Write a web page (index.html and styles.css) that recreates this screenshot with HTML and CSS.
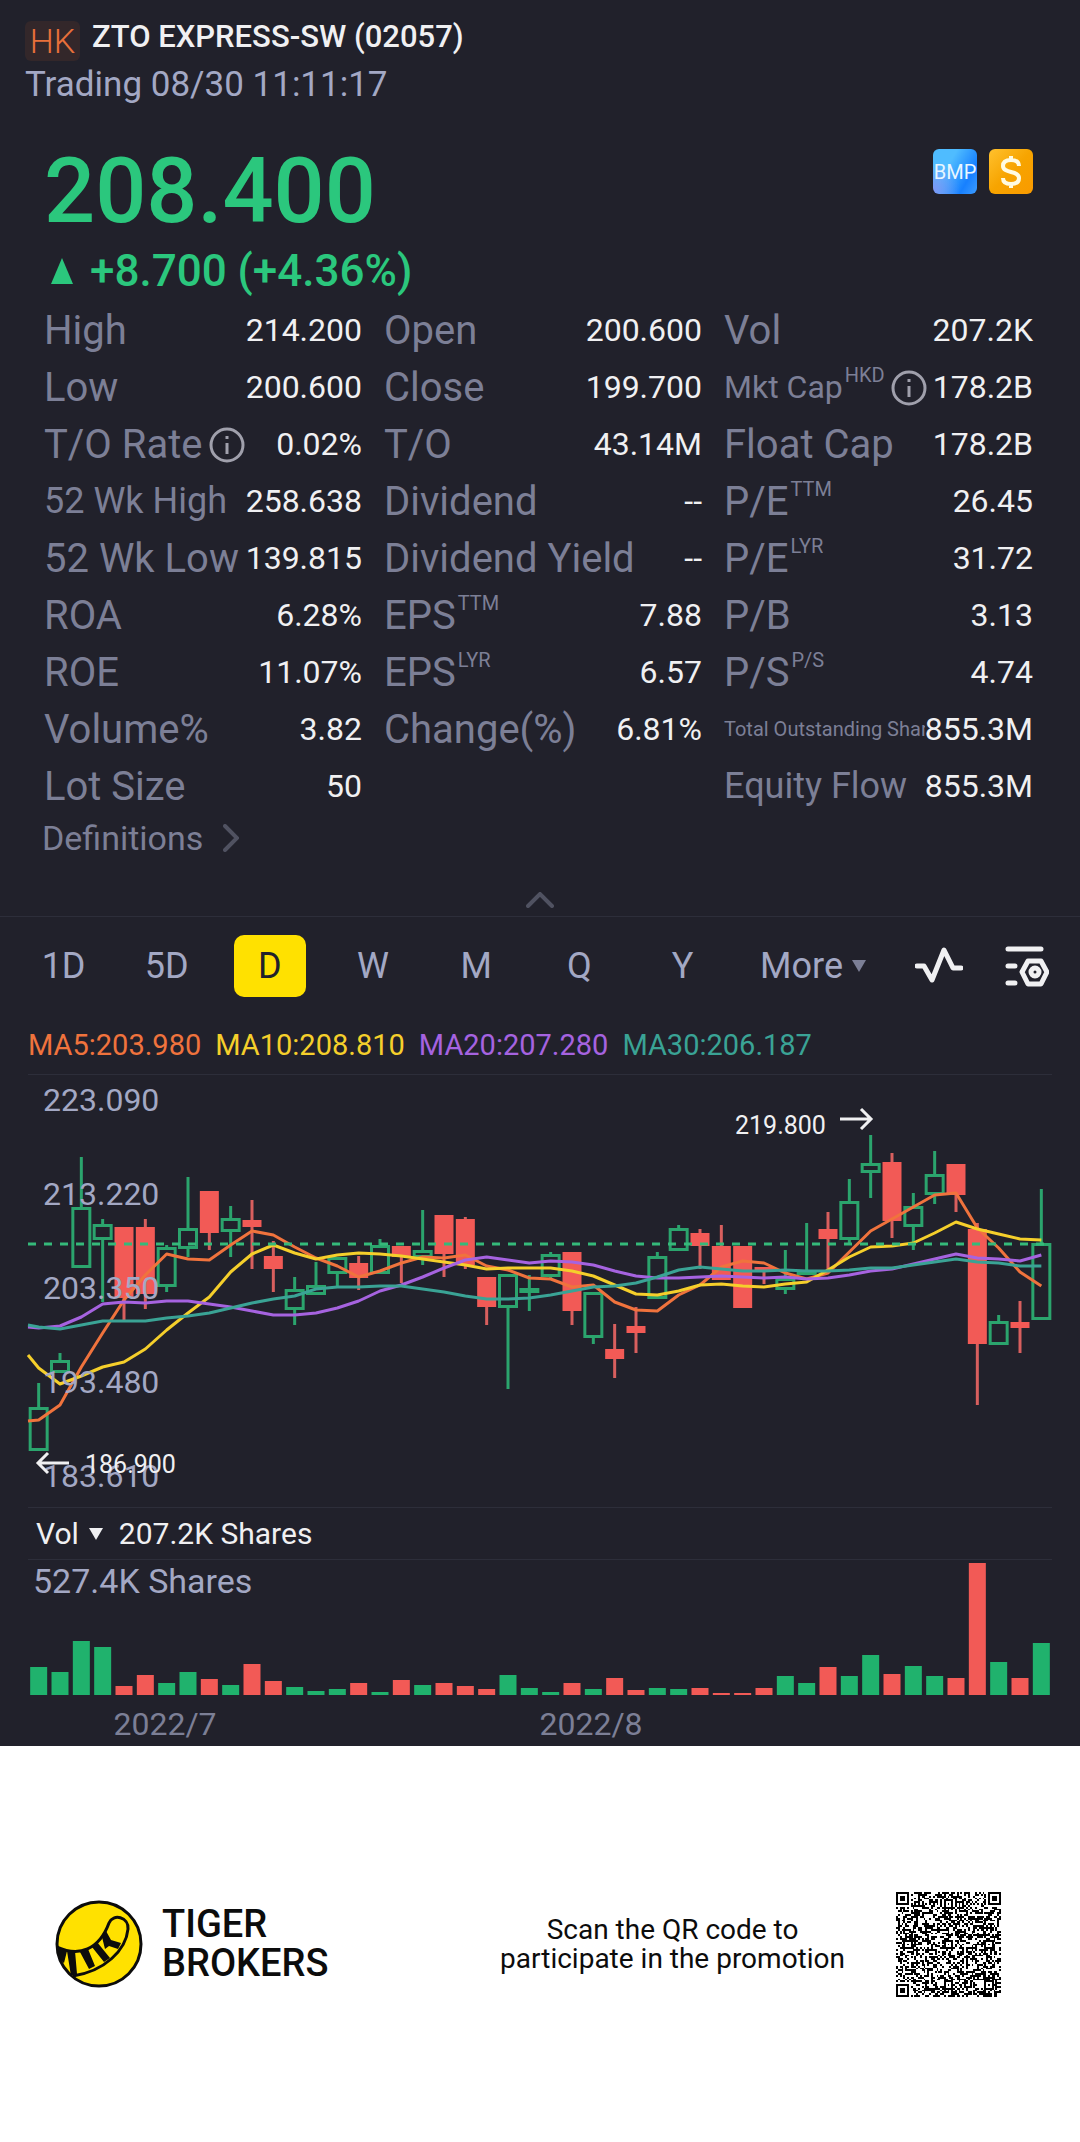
FILE: index.html
```html
<!DOCTYPE html>
<html lang="en">
<head>
<meta charset="utf-8">
<meta name="viewport" content="width=device-width, initial-scale=1">
<title>ZTO EXPRESS-SW (02057)</title>
<link rel="stylesheet" href="styles.css">
</head>
<body>
<main class="quote">
  <header class="head">
    <div class="head-row">
      <span class="market">HK</span>
      <h1 class="name">ZTO EXPRESS-SW (02057)</h1>
    </div>
    <p class="status">Trading 08/30 11:11:17</p>
  </header>

  <section class="price-block">
    <div>
      <p class="price">208.400</p>
      <p class="change">
        <svg class="up" viewBox="0 0 24 28" aria-hidden="true"><path d="M12 1 23 27H1z"/></svg>
        <span>+8.700 (+4.36%)</span>
      </p>
    </div>
    <div class="badges">
      <span class="badge badge-bmp">BMP</span>
      <span class="badge badge-cash">
        <svg viewBox="0 0 44 44" aria-label="Dollar"><path d="M30 16c0-4-3-6-8-6s-8 2-8 6c0 8 16 4 16 12 0 4-3 6-8 6s-8-2-8-6M22 6v5M22 33v5" /></svg>
      </span>
    </div>
  </section>

  <section class="stats">
    <dl class="col">
      <div class="row"><dt>High</dt><dd>214.200</dd></div>
      <div class="row"><dt>Low</dt><dd>200.600</dd></div>
      <div class="row"><dt>T/O Rate<svg class="info" viewBox="0 0 36 36" aria-label="Info"><circle cx="18" cy="18" r="16"/><path d="M18 16v11M18 9v3"/></svg></dt><dd>0.02%</dd></div>
      <div class="row"><dt class="mid">52 Wk High</dt><dd>258.638</dd></div>
      <div class="row"><dt>52 Wk Low</dt><dd>139.815</dd></div>
      <div class="row"><dt>ROA</dt><dd>6.28%</dd></div>
      <div class="row"><dt>ROE</dt><dd>11.07%</dd></div>
      <div class="row"><dt>Volume%</dt><dd>3.82</dd></div>
      <div class="row"><dt>Lot Size</dt><dd>50</dd></div>
    </dl>
    <dl class="col">
      <div class="row"><dt>Open</dt><dd>200.600</dd></div>
      <div class="row"><dt>Close</dt><dd>199.700</dd></div>
      <div class="row"><dt>T/O</dt><dd>43.14M</dd></div>
      <div class="row"><dt>Dividend</dt><dd>--</dd></div>
      <div class="row"><dt>Dividend Yield</dt><dd>--</dd></div>
      <div class="row"><dt>EPS<sup>TTM</sup></dt><dd>7.88</dd></div>
      <div class="row"><dt>EPS<sup>LYR</sup></dt><dd>6.57</dd></div>
      <div class="row"><dt>Change(%)</dt><dd>6.81%</dd></div>
    </dl>
    <dl class="col">
      <div class="row"><dt>Vol</dt><dd>207.2K</dd></div>
      <div class="row"><dt class="small">Mkt Cap<sup>HKD</sup><svg class="info" viewBox="0 0 36 36" aria-label="Info"><circle cx="18" cy="18" r="16"/><path d="M18 16v11M18 9v3"/></svg></dt><dd>178.2B</dd></div>
      <div class="row"><dt>Float Cap</dt><dd>178.2B</dd></div>
      <div class="row"><dt>P/E<sup>TTM</sup></dt><dd>26.45</dd></div>
      <div class="row"><dt>P/E<sup>LYR</sup></dt><dd>31.72</dd></div>
      <div class="row"><dt>P/B</dt><dd>3.13</dd></div>
      <div class="row"><dt>P/S<sup>P/S</sup></dt><dd>4.74</dd></div>
      <div class="row"><dt class="tiny">Total Outstanding Shares</dt><dd>855.3M</dd></div>
      <div class="row"><dt class="mid">Equity Flow</dt><dd>855.3M</dd></div>
    </dl>
  </section>

  <a class="definitions" href="#definitions">Definitions
    <svg viewBox="0 0 16 28" aria-hidden="true"><path d="M2 2l12 12L2 26"/></svg>
  </a>
  <button class="collapse" type="button" aria-label="Collapse">
    <svg viewBox="0 0 28 16" aria-hidden="true"><path d="M2 14 14 2l12 12"/></svg>
  </button>

  <nav class="toolbar">
    <div class="tabs">
      <button type="button">1D</button>
      <button type="button">5D</button>
      <button type="button" class="active">D</button>
      <button type="button">W</button>
      <button type="button">M</button>
      <button type="button">Q</button>
      <button type="button">Y</button>
    </div>
    <button type="button" class="more">More<svg viewBox="0 0 14 12" aria-hidden="true"><path d="M0 0h14L7 12z"/></svg></button>
    <button type="button" class="tool" aria-label="Indicators">
      <svg width="48" height="40" viewBox="0 0 48 40"><path d="M2 20h7l8 14L29 4l9 18h8"/></svg>
    </button>
    <button type="button" class="tool" aria-label="Chart settings">
      <svg width="44" height="42" viewBox="0 0 44 42"><path d="M3 4h33M3 21h7M3 38h7M23 16h13l6 11-6 12H23l-6-12z"/><circle cx="30" cy="27" r="4"/></svg>
    </button>
  </nav>

  <section class="charts">
    <ul class="averages">
      <li class="ma5">MA5:203.980</li>
      <li class="ma10">MA10:208.810</li>
      <li class="ma20">MA20:207.280</li>
      <li class="ma30">MA30:206.187</li>
    </ul>
    <svg class="candles" id="candles" viewBox="0 0 1024 432" role="img" aria-label="Daily candles"></svg>
    <div class="vol-head">
      <button type="button" class="vol-pick">Vol<svg viewBox="0 0 14 12" aria-hidden="true"><path d="M0 0h14L7 12z"/></svg></button>
      <span>207.2K Shares</span>
    </div>
    <svg class="volume" id="volume" viewBox="0 0 1024 186" role="img" aria-label="Daily volume"></svg>
  </section>
</main>

<footer class="promo">
  <div class="brand">
    <svg class="logo" viewBox="0 0 88 88" aria-hidden="true">
      <circle class="disc" cx="44" cy="44" r="42"/>
      <path class="tail" d="M2 47C24 57 44 50 54 23C58 13 74 17 73 29C71 50 50 71 18 76"/>
      <path class="stripe" d="M2 46 12 51 9 63 5 60zM12 51H20L22 74 16 76zM25 52 33 49 40 66 34 69zM37 47 42 42 55 58 49 62zM47 37 51 31 56 40 66 43 63 49 54 46 50 49z"/>
    </svg>
    <strong class="brand-name">TIGER<br>BROKERS</strong>
  </div>
  <p class="scan">Scan the QR code to<br>participate in the promotion</p>
  <svg class="qr" id="qr" viewBox="0 0 57 57" role="img" aria-label="QR code" shape-rendering="crispEdges"></svg>
</footer>
<script src="chart.js"></script>
</body>
</html>
```
FILE: styles.css
```css
* { box-sizing: border-box; }

body {
  margin: 0;
  background: #fff;
  font-family: Roboto, "Liberation Sans", sans-serif;
  color: #f0f0f2;
}

h1, p, dl, dd, ul { margin: 0; padding: 0; }

button {
  padding: 0;
  border: 0;
  background: none;
  color: inherit;
  font: inherit;
}

svg { display: block; flex: none; }

.quote { background: #21212b; }

/* Header */
.head { padding: 21px 25px 0; }
.head-row { display: flex; gap: 12px; align-items: flex-start; height: 42px; }
.market {
  width: 55px;
  border-radius: 6px;
  background: #33272a;
  color: #e8703a;
  font-size: 34px;
  font-weight: 300;
  line-height: 40px;
  text-align: center;
}
.name { font-size: 31px; font-weight: 500; line-height: 32px; }
.status { color: #a3a8c4; font-size: 35px; line-height: 43px; }

/* Price */
.price-block {
  display: flex;
  justify-content: space-between;
  padding: 35px 47px 0 44px;
  color: #2bc77d;
}
.price { font-size: 90px; font-weight: 500; line-height: 102px; }
.change {
  display: flex;
  gap: 16px;
  align-items: center;
  padding-left: 6px;
  font-size: 44px;
  font-weight: 500;
  line-height: 56px;
}
.up { width: 24px; height: 28px; fill: #2bc77d; }
.badges { display: flex; gap: 12px; margin-top: 8px; }
.badge {
  display: flex;
  align-items: center;
  justify-content: center;
  width: 44px;
  height: 45px;
  border-radius: 6px;
}
.badge-bmp {
  background: radial-gradient(circle at 0 90%, #7d96f5, transparent 45%), linear-gradient(120deg, #4fbcff 35%, #1780ff 75%, #3d9cff);
  color: #e9f6ff;
  font-size: 20px;
}
.badge-cash { background: linear-gradient(135deg, #ffc12e, #f7a400 50%, #f99a00); }
.badge-cash svg { width: 44px; height: 44px; fill: none; stroke: #fffbe2; stroke-width: 4; }

/* Figures */
.stats {
  display: grid;
  grid-template-columns: 318fr 318fr 309fr;
  gap: 22px;
  padding: 0 47px 0 44px;
  margin-top: 3px;
}
.col { min-width: 0; }
.row { display: flex; align-items: center; justify-content: space-between; height: 57px; }
dt {
  display: flex;
  align-items: center;
  min-width: 0;
  overflow: hidden;
  color: #7c7f96;
  font-size: 40px;
  line-height: 57px;
  white-space: nowrap;
}
dt.mid { font-size: 36px; }
dt.small { font-size: 32px; }
dt.tiny { display: block; font-size: 20px; }
sup { align-self: flex-start; margin-left: 2px; font-size: 20px; line-height: 32px; }
dd { font-size: 32px; line-height: 57px; }
.info { width: 36px; height: 36px; margin-left: 6px; fill: none; stroke: #a0a0ac; stroke-width: 3; }

.definitions {
  display: flex;
  gap: 20px;
  align-items: center;
  width: max-content;
  margin-left: 42px;
  color: #7c7f96;
  font-size: 34px;
  line-height: 46px;
  text-decoration: none;
}
.definitions svg, .collapse svg { fill: none; stroke: #505261; stroke-width: 4; stroke-linecap: round; }
.definitions svg { width: 16px; height: 28px; }
.collapse { display: block; margin: 31px auto 8px; }
.collapse svg { width: 28px; height: 16px; }

/* Period bar */
.toolbar {
  display: flex;
  align-items: center;
  padding: 18px 31px 0 12px;
  border-top: 1px solid #2d2e3a;
  color: #a3a8c4;
  font-size: 36px;
}
.tabs { display: grid; flex: 1; grid-template-columns: repeat(7, 1fr); justify-items: center; margin-right: 26px; }
.tabs button { width: 72px; border-radius: 10px; line-height: 62px; }
.tabs .active { background: #ffe100; color: #21212b; }
.more { display: flex; gap: 9px; align-items: center; margin-right: 49px; }
.more svg { width: 14px; height: 12px; fill: #7c7f96; }
.tool svg { fill: none; stroke: #f0f0f2; stroke-width: 5; stroke-linecap: round; stroke-linejoin: round; }
.tool + .tool { margin-left: 42px; }

/* Charts */
.charts { padding: 0 28px; }
.averages {
  display: flex;
  gap: 14px;
  height: 78px;
  border-bottom: 1px solid #2d2e3a;
  font-size: 29px;
  line-height: 96px;
  list-style: none;
}
.ma5 { color: #f0733d; }
.ma10 { color: #f5cf2b; }
.ma20 { color: #a663e0; }
.ma30 { color: #3aa395; }
.candles, .volume { width: 100%; height: auto; overflow: visible; }

.rise { fill: none; stroke: #2ba46d; stroke-width: 3; }
.fall { fill: #f25a56; }
.wick-rise { stroke: #2ba46d; stroke-width: 3; }
.wick-fall { stroke: #d85f5e; stroke-width: 3; }
.last { stroke: #35b97a; stroke-width: 3; stroke-dasharray: 8 8; }
.line { fill: none; stroke: currentColor; stroke-width: 3; stroke-linejoin: round; }
.axis { fill: #a3a8c4; font-size: 32px; }
.peak { fill: #a3a8c4; font-size: 34px; }
.date { fill: #7c7f96; font-size: 32px; text-anchor: middle; }
.mark { fill: #f0f0f2; font-size: 25px; }
.arrow { fill: none; stroke: #f0f0f2; stroke-width: 3; }
.bar-rise { fill: #20b26d; }

.vol-head {
  display: flex;
  gap: 16px;
  align-items: center;
  height: 53px;
  padding-left: 8px;
  border: solid #2d2e3a;
  border-width: 1px 0;
  font-size: 30px;
}
.vol-pick { display: flex; gap: 10px; align-items: center; }
.vol-pick svg { width: 14px; height: 12px; fill: #f0f0f2; }

/* Footer */
.promo {
  display: flex;
  align-items: center;
  min-height: 396px;
  padding: 0 79px 0 55px;
  color: #0c0c0c;
}
.brand { display: flex; gap: 19px; align-items: center; }
.logo { width: 88px; height: 88px; }
.disc, .tail { fill: #ffe100; stroke: #0c0c0c; stroke-width: 3; }
.stripe { fill: #0c0c0c; }
.brand-name { font-size: 38px; font-weight: 500; line-height: 39px; }
.scan { margin: 0 51px 0 auto; font-size: 28px; line-height: 29px; text-align: center; }
.qr { width: 105px; height: 105px; }
```
FILE: chart.js
```js
const STEP = 1024 / 48;
const mid = i => STEP * (i + 0.5);

// direction, high, body top, body bottom, low
const candles = [
  ['g',308,332,376,376],['g',278,285,298,298],['g',82,132,193,193],['g',144,149,165,227],
  ['r',152,152,223,247],['r',144,152,219,234],['g',170,172,212,217],['g',102,153,174,182],
  ['r',116,116,158,175],['g',131,143,157,182],['r',125,145,152,194],['r',166,181,194,217],
  ['g',202,214,235,250],['g',187,210,220,220],['g',182,182,199,211],['r',181,188,203,215],
  ['g',164,170,199,199],['r',171,171,182,208],['g',135,175,183,190],['r',140,140,179,202],
  ['r',142,144,190,194],['r',202,202,232,250],['g',199,199,233,314],['g',200,213,218,236],
  ['g',177,179,202,203],['r',177,177,236,250],['g',217,217,263,269],['r',249,274,284,303],
  ['r',232,251,258,278],['g',177,181,224,224],['g',150,153,176,176],['r',154,158,171,194],
  ['r',150,171,205,205],['r',171,171,233,233],['r',192,192,196,209],['g',175,203,215,219],
  ['g',148,195,200,200],['r',137,154,164,198],['g',104,126,165,169],['g',60,88,98,123],
  ['r',78,87,146,163],['g',118,131,152,175],['g',76,99,120,129],['r',89,89,120,137],
  ['r',148,154,269,330],['g',240,246,270,270],['r',226,247,253,278],['g',114,168,245,245]
];

// The first value of each line is its level at the left edge.
const lines = {
  ma5: [346,345,330,292,258,225,200,179,184,185,170,156,160,172,183,191,202,196,188,182,183,180,191,195,203,204,212,210,227,235,236,220,210,192,186,188,198,204,198,177,156,144,132,120,118,153,173,197,211],
  ma10: [280,293,309,301,292,287,274,255,238,222,197,179,170,178,184,180,178,179,181,184,187,190,194,193,193,193,196,201,210,219,220,216,210,209,211,212,209,207,195,182,172,171,168,158,147,154,159,164,165],
  ma20: [252,253,251,242,229,227,228,226,226,229,232,236,240,240,238,233,226,216,210,202,193,185,182,185,188,186,187,190,196,201,203,203,202,201,202,203,202,204,203,200,196,194,189,184,179,183,184,186,180],
  ma30: [250,252,254,250,246,246,246,243,241,238,233,228,224,221,214,212,212,211,211,214,217,221,224,224,223,220,216,212,211,208,202,195,192,194,196,196,195,196,196,195,193,193,190,187,184,187,188,191,191]
};

const volumes = [28,23,54,48,9,20,12,23,16,10,31,14,8,4,6,12,3,15,10,12,9,6,20,7,3,12,6,17,5,7,6,7,2,2,7,19,12,28,19,40,21,29,19,17,132,33,17,52];

let out = '';
candles.forEach(([dir, high, top, bottom, low], i) => {
  const x = mid(i);
  if (dir === 'g') {
    out += `<path class="wick-rise" d="M${x} ${high}V${top}M${x} ${bottom}V${low}"/>`;
    out += `<rect class="rise" x="${x - 8.5}" y="${top + 1.5}" width="17" height="${bottom - top - 3}"/>`;
  } else {
    out += `<path class="wick-fall" d="M${x} ${high}V${low}"/>`;
    out += `<rect class="fall" x="${x - 9.5}" y="${top}" width="19" height="${bottom - top}"/>`;
  }
});
for (const [name, ys] of Object.entries(lines)) {
  const pts = ys.map((y, i) => `${i ? mid(i - 1) : 0},${y}`).join(' ');
  out += `<polyline class="line ${name}" points="${pts}"/>`;
}
out += '<path class="last" d="M0 169H1024"/>';
['223.090', '213.220', '203.350', '193.480', '183.610'].forEach((label, i) => {
  out += `<text class="axis" x="15" y="${36 + 94 * i}">${label}</text>`;
});
out += '<text class="mark" x="707" y="59">219.800</text><path class="arrow" d="M812 44h31M833 34l10 10-10 10"/>';
out += '<text class="mark" x="57" y="398">186.900</text><path class="arrow" d="M41 388H10M20 378l-10 10 10 10"/>';
document.getElementById('candles').innerHTML = out;

let bars = '';
volumes.forEach((h, i) => {
  bars += `<rect class="${candles[i][0] === 'g' ? 'bar-rise' : 'fall'}" x="${mid(i) - 8.5}" y="${135 - h}" width="17" height="${h}"/>`;
});
bars += '<text class="peak" x="5" y="33">527.4K Shares</text>';
bars += '<text class="date" x="137" y="175">2022/7</text><text class="date" x="563" y="175">2022/8</text>';
document.getElementById('volume').innerHTML = bars;

// QR grid: finder patterns in three corners, alignment marks, data modules between.
const SIZE = 57;
let seed = 20570830;
const bit = () => {
  seed = (seed * 1103515245 + 12345) % 2147483648;
  return (seed >> 16) & 1;
};
const ring = (x, y, cx, cy) => Math.max(Math.abs(x - cx), Math.abs(y - cy));
const finders = [[3, 3], [53, 3], [3, 53]];
const aligns = [[28, 6], [6, 28], [28, 28], [50, 28], [28, 50], [50, 50]];
let modules = '';
for (let y = 0; y < SIZE; y++) {
  for (let x = 0; x < SIZE; x++) {
    let on = bit() === 1;
    if (x === 6) on = y % 2 === 0;
    if (y === 6) on = x % 2 === 0;
    for (const [cx, cy] of aligns) {
      const r = ring(x, y, cx, cy);
      if (r <= 2) on = r !== 1;
    }
    for (const [cx, cy] of finders) {
      const r = ring(x, y, cx, cy);
      if (r <= 4) on = r < 2 || r === 3;
    }
    if (on) modules += `M${x} ${y}h1v1h-1z`;
  }
}
document.getElementById('qr').innerHTML = `<path d="${modules}"/>`;
```
